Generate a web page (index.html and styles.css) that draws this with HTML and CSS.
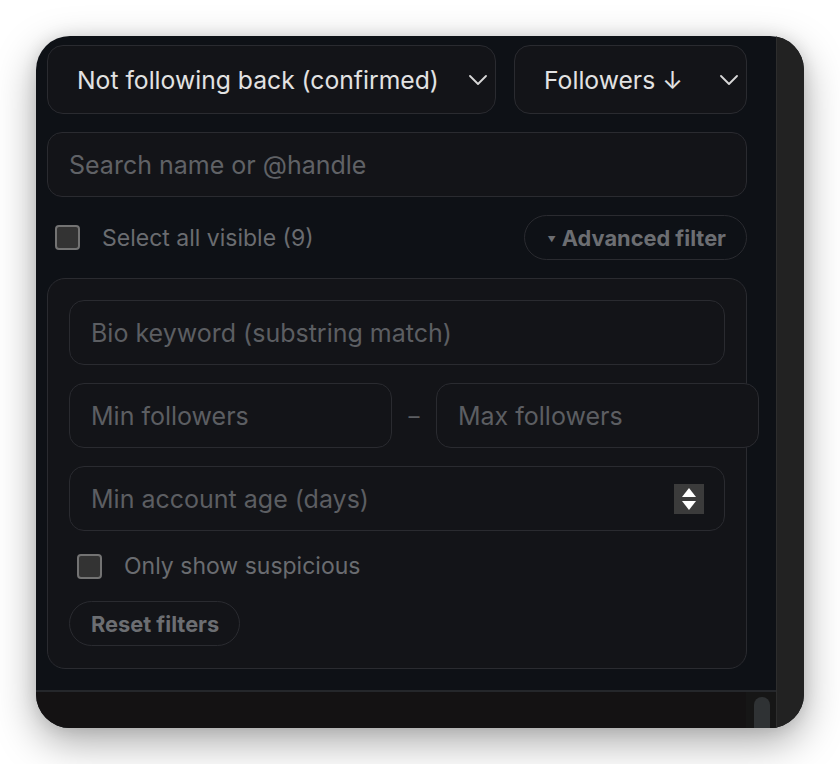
FILE: index.html
```html
<!DOCTYPE html>
<html lang="en">
<head>
<meta charset="utf-8">
<title>Filters</title>
<link rel="stylesheet" href="styles.css">
</head>
<body>
<div class="window">
  <div class="main">
    <div class="pane">
      <div class="content">
        <div class="select-row">
          <div class="select select-wide">
            <span class="select-text">Not following back (confirmed)</span>
            <svg class="chevron" width="18" height="10" viewBox="0 0 18 10"><path d="M1 1l8 8 8-8" fill="none" stroke="#d8d8d8" stroke-width="1.8" stroke-linecap="round" stroke-linejoin="round"/></svg>
          </div>
          <div class="select select-narrow">
            <span class="select-text">Followers ↓</span>
            <svg class="chevron" width="18" height="10" viewBox="0 0 18 10"><path d="M1 1l8 8 8-8" fill="none" stroke="#d8d8d8" stroke-width="1.8" stroke-linecap="round" stroke-linejoin="round"/></svg>
          </div>
        </div>

        <div class="field field-search">
          <input class="field-input" type="text" placeholder="Search name or @handle">
        </div>

        <div class="check-row">
          <label class="check">
            <span class="box"></span>
            <span class="check-label">Select all visible (9)</span>
          </label>
          <button class="pill pill-adv"><span class="tri">▼</span>Advanced filter</button>
        </div>

        <div class="filter-panel">
          <div class="field">
            <input class="field-input" type="text" placeholder="Bio keyword (substring match)">
          </div>
          <div class="range-row">
            <div class="field field-half">
              <input class="field-input" type="text" placeholder="Min followers">
            </div>
            <span class="dash">–</span>
            <div class="field field-half">
              <input class="field-input" type="text" placeholder="Max followers">
            </div>
          </div>
          <div class="field">
            <input class="field-input" type="text" placeholder="Min account age (days)">
            <span class="spinner">
              <span class="spin-up"></span>
              <span class="spin-down"></span>
            </span>
          </div>
          <label class="check check-inner">
            <span class="box"></span>
            <span class="check-label">Only show suspicious</span>
          </label>
          <div class="reset-row">
            <button class="pill pill-reset">Reset filters</button>
          </div>
        </div>
      </div>
      <div class="bottom">
        <div class="bottom-track"><div class="bottom-thumb"></div></div>
      </div>
    </div>
    <div class="vscroll"></div>
  </div>
</div>
</body>
</html>
```

FILE: styles.css
```css
* { box-sizing: border-box; }

html, body {
  margin: 0;
  padding: 0;
  background: #ffffff;
}

body {
  padding: 36px;
  font-family: Inter, "Noto Sans", sans-serif;
}

.window {
  width: 768px;
  height: 692px;
  border-radius: 34px;
  overflow: hidden;
  background: #0e1116;
  box-shadow: 0 14px 40px rgba(0, 0, 0, 0.34), 0 0 16px rgba(0, 0, 0, 0.1);
}

.main {
  display: flex;
  height: 100%;
}

.pane {
  width: 740px;
  display: flex;
  flex-direction: column;
}

.content {
  flex: 1;
  padding: 9px 29px 0 11px;
  display: flex;
  flex-direction: column;
  gap: 18px;
  min-height: 0;
}

.vscroll {
  width: 28px;
  background: #222222;
  border-left: 1px solid #2d2d2d;
}

.bottom {
  height: 38px;
  border-top: 2px solid #25272b;
  background: #141213;
  display: flex;
  justify-content: flex-end;
}

.bottom-track {
  width: 30px;
  background: #161616;
  padding: 5px 6px 0 8px;
}

.bottom-thumb {
  height: 40px;
  border-radius: 8px;
  background: #2f3234;
}

/* selects */
.select-row {
  display: flex;
  gap: 18px;
}

.select {
  height: 69px;
  border: 1.5px solid #2a2b30;
  border-radius: 16px;
  background: #131418;
  display: flex;
  align-items: center;
  justify-content: space-between;
  padding: 0 8px 0 29px;
}

.select-wide { width: 449px; }
.select-narrow { width: 233px; }

.select-text {
  color: #e2e2e2;
  font-size: 24.7px;
  white-space: nowrap;
}

.chevron { flex-shrink: 0; }

/* fields */
.field {
  height: 65px;
  border: 1.5px solid #2a2b30;
  border-radius: 15px;
  background: #131418;
  display: flex;
  align-items: center;
  padding: 0 20px 0 21px;
}

.field-input {
  flex: 1;
  min-width: 0;
  border: 0;
  outline: 0;
  background: transparent;
  font-family: Inter, "Noto Sans", sans-serif;
  font-size: 25px;
  color: #e2e2e2;
  padding: 0;
}

.field-input::placeholder {
  color: #5c5e62;
}

.field-search .field-input::placeholder {
  color: #606266;
}

/* checkbox row */
.check-row {
  height: 45px;
  display: flex;
  align-items: center;
  justify-content: space-between;
  padding-left: 8px;
}

.check {
  display: flex;
  align-items: center;
  gap: 22px;
}

.box {
  width: 25px;
  height: 25px;
  border: 2px solid #737373;
  border-radius: 4px;
  background: #333333;
}

.check-label {
  color: #6a6c70;
  font-size: 23px;
  white-space: nowrap;
}

.pill {
  height: 45px;
  border: 1.5px solid #2a2b30;
  border-radius: 999px;
  background: transparent;
  color: #6c6e72;
  font-family: Inter, "Noto Sans", sans-serif;
  font-weight: 700;
  font-size: 21.8px;
  white-space: nowrap;
  display: flex;
  align-items: center;
  padding: 0 20px 0 21px;
}

.pill-adv {
  padding-left: 22px;
}

.tri {
  font-size: 8px;
  margin-right: 6px;
  position: relative;
  top: 1px;
}

/* filter panel */
.filter-panel {
  height: 391px;
  border: 1.5px solid #2a2b30;
  border-radius: 18px;
  background: #131418;
  padding: 21px;
  display: flex;
  flex-direction: column;
  gap: 18px;
}

.range-row {
  display: flex;
  align-items: center;
}

.field-half {
  width: 323px;
  flex-shrink: 0;
}

.dash {
  width: 44px;
  flex-shrink: 0;
  text-align: center;
  color: #5c5e62;
  font-size: 22px;
}

.spinner {
  width: 30px;
  height: 30px;
  background: #3b3b3b;
  display: flex;
  flex-direction: column;
  align-items: center;
  justify-content: center;
  gap: 4px;
  flex-shrink: 0;
}

.spin-up {
  width: 0;
  height: 0;
  border-left: 7px solid transparent;
  border-right: 7px solid transparent;
  border-bottom: 9px solid #ffffff;
}

.spin-down {
  width: 0;
  height: 0;
  border-left: 7px solid transparent;
  border-right: 7px solid transparent;
  border-top: 9px solid #ffffff;
}

.check-inner {
  height: 34px;
  padding-left: 8px;
}

.reset-row {
  display: flex;
}
```
